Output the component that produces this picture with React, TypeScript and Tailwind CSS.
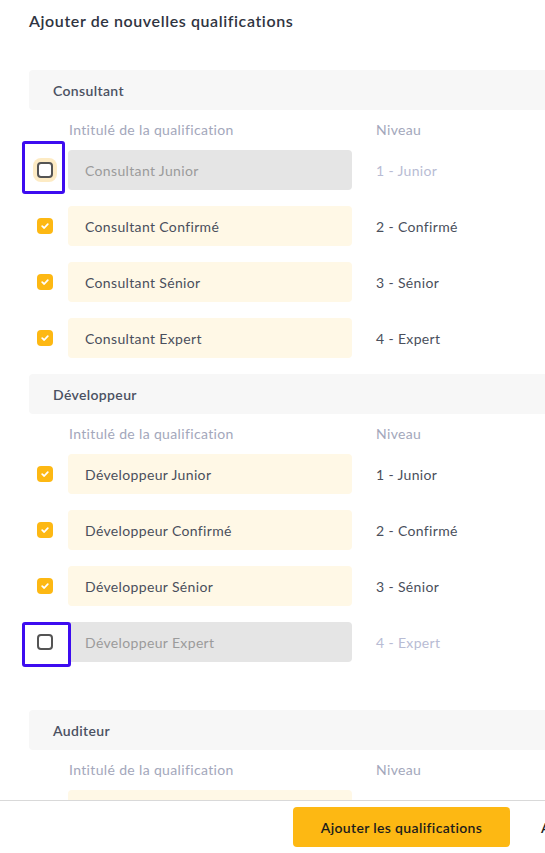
import React from "react";

type Row = { label: string; level: string; checked: boolean; focus?: boolean };
type Section = { title: string; rows: Row[] };

const sections: Section[] = [
  {
    title: "Consultant",
    rows: [
      { label: "Consultant Junior", level: "1 - Junior", checked: false, focus: true },
      { label: "Consultant Confirmé", level: "2 - Confirmé", checked: true },
      { label: "Consultant Sénior", level: "3 - Sénior", checked: true },
      { label: "Consultant Expert", level: "4 - Expert", checked: true },
    ],
  },
  {
    title: "Développeur",
    rows: [
      { label: "Développeur Junior", level: "1 - Junior", checked: true },
      { label: "Développeur Confirmé", level: "2 - Confirmé", checked: true },
      { label: "Développeur Sénior", level: "3 - Sénior", checked: true },
      { label: "Développeur Expert", level: "4 - Expert", checked: false },
    ],
  },
  {
    title: "Auditeur",
    rows: [{ label: "Auditeur Junior", level: "1 - Junior", checked: true }],
  },
];

const Checkbox = ({ checked, focus }: { checked: boolean; focus?: boolean }) => {
  if (checked) {
    return (
      <div className="w-4 h-4 rounded-[4px] bg-[#fdb813] flex items-center justify-center">
        <svg width="10" height="10" viewBox="0 0 10 10" fill="none">
          <path d="M2.2 5.2 L4.2 7 L7.8 3.2" stroke="white" strokeWidth="1.8" strokeLinecap="round" strokeLinejoin="round" />
        </svg>
      </div>
    );
  }
  return (
    <div
      className={
        focus
          ? "w-4 h-4 rounded-[4px] border-2 border-[#545454] bg-white shadow-[0_0_0_4px_#fdebc4]"
          : "w-4 h-4 rounded-[4px] border-2 border-[#545454] bg-white"
      }
    />
  );
};

const QualifRow = ({ row }: { row: Row }) => (
  <div className="flex items-center">
    <div className="w-[39px] pl-2 flex items-center">
      <Checkbox checked={row.checked} focus={row.focus} />
    </div>
    <div
      className={
        row.checked
          ? "w-[284px] h-10 rounded-[4px] bg-[#fff8e6] flex items-center pl-[17px] text-[#4a4f5c]"
          : "w-[284px] h-10 rounded-[4px] bg-[#e5e5e5] flex items-center pl-[17px] text-[#9b9b9b]"
      }
    >
      {row.label}
    </div>
    <div className={row.checked ? "ml-6 text-[#4a4f5c]" : "ml-6 text-[#b8bcd4]"}>{row.level}</div>
  </div>
);

export default function App() {
  return (
    <div
      className="relative w-[545px] h-[853px] overflow-hidden bg-white text-[14px] tracking-[0.35px]"
      style={{ fontFamily: "Lato, 'Noto Sans', sans-serif" }}
    >
      <div className="pl-[29px] pt-[9px]">
        <h2 className="text-[16px] leading-6 font-semibold text-[#2f3441] tracking-[0.6px]">
          Ajouter de nouvelles qualifications
        </h2>
        <div className="mt-[37px] flex flex-col gap-4">
          {sections.map((s, i) => (
            <div key={s.title} className={i === 2 ? "mt-8" : ""}>
              <div className="w-[540px] h-10 bg-[#f7f7f7] rounded-l-[4px] flex items-center pl-6 font-semibold text-[#4b5162]">
                {s.title}
              </div>
              <div className="mt-[10px] flex text-[#a3a7bb] leading-5">
                <span className="ml-[40px] w-[307px]">Intitulé de la qualification</span>
                <span>Niveau</span>
              </div>
              <div className="mt-[10px] flex flex-col gap-4">
                {s.rows.map((r) => (
                  <QualifRow key={r.label} row={r} />
                ))}
              </div>
            </div>
          ))}
        </div>
      </div>

      <div className="absolute left-0 right-0 bottom-0 h-[53px] bg-white border-t border-[#d9d9d9] flex items-center pl-[293px] gap-[31px] whitespace-nowrap">
        <button className="shrink-0 w-[217px] h-10 rounded-[4px] bg-[#fdb813] font-semibold text-[#1c1c1c]">
          Ajouter les qualifications
        </button>
        <button className="shrink-0 font-semibold text-[#1c1c1c]">Annuler</button>
      </div>

      <div className="absolute left-[22px] top-[141px] w-[43px] h-[53px] border-[3px] border-[#3d0cf0] rounded-[3px]" />
      <div className="absolute left-[22px] top-[622px] w-[49px] h-[45px] border-[3px] border-[#3d0cf0] rounded-[3px]" />
    </div>
  );
}
